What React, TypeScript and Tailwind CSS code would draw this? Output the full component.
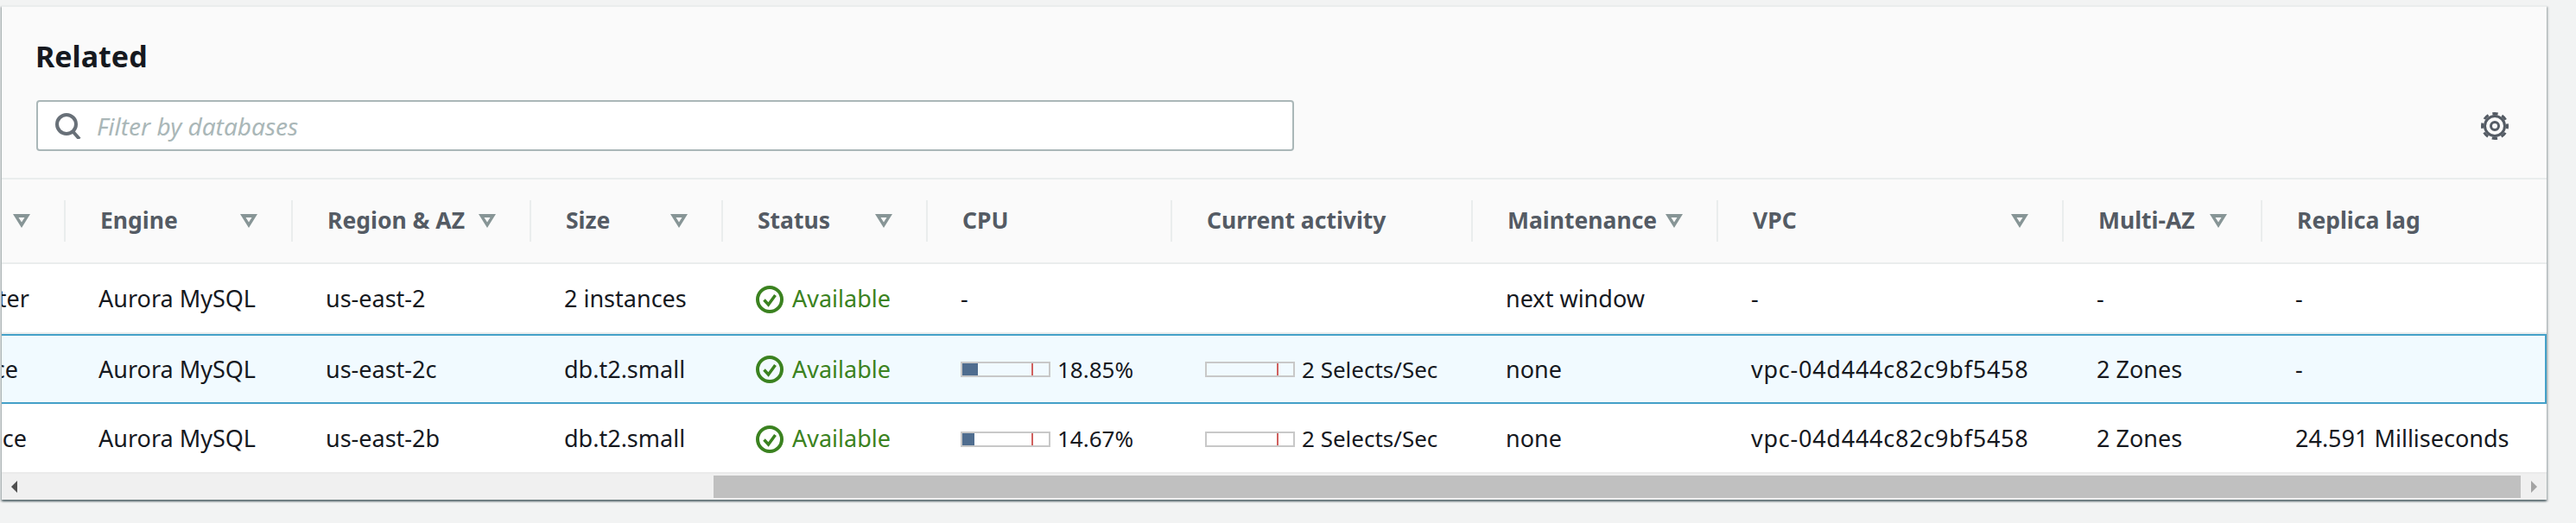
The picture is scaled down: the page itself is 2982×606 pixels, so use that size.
import React from 'react';

const gridCols =
  'grid grid-cols-[74px_263px_276px_222px_237px_283px_348px_284px_400px_230px_1fr]';

const headers = [
  { label: '', sortable: true },
  { label: 'Engine', sortable: true },
  { label: 'Region & AZ', sortable: true },
  { label: 'Size', sortable: true },
  { label: 'Status', sortable: true },
  { label: 'CPU', sortable: false },
  { label: 'Current activity', sortable: false },
  { label: 'Maintenance', sortable: true },
  { label: 'VPC', sortable: true },
  { label: 'Multi-AZ', sortable: true },
  { label: 'Replica lag', sortable: false },
];

const rows = [
  {
    role: 'Regional cluster',
    roleInset: 'pr-[42px]',
    region: 'us-east-2',
    size: '2 instances',
    cpu: null,
    activity: false,
    maintenance: 'next window',
    vpc: '-',
    multiAz: '-',
    lag: '-',
    selected: false,
  },
  {
    role: 'Writer instance',
    roleInset: 'pr-[55px]',
    region: 'us-east-2c',
    size: 'db.t2.small',
    cpu: { fill: 18, label: '18.85%' },
    activity: true,
    maintenance: 'none',
    vpc: 'vpc-04d444c82c9bf5458',
    multiAz: '2 Zones',
    lag: '-',
    selected: true,
  },
  {
    role: 'Reader instance',
    roleInset: 'pr-[45px]',
    region: 'us-east-2b',
    size: 'db.t2.small',
    cpu: { fill: 14, label: '14.67%' },
    activity: true,
    maintenance: 'none',
    vpc: 'vpc-04d444c82c9bf5458',
    multiAz: '2 Zones',
    lag: '24.591 Milliseconds',
    selected: false,
  },
];

function SortIcon() {
  return (
    <svg width="20" height="16" viewBox="0 0 20 16" className="shrink-0">
      <path fill="#879596" fillRule="evenodd" d="M0 0H20L10 16Z M6.5 4H13.5L10 9.6Z" />
    </svg>
  );
}

function SearchIcon() {
  return (
    <svg width="30" height="30" viewBox="0 0 30 30" fill="none" stroke="#687078" className="shrink-0">
      <circle cx="13" cy="13" r="11" strokeWidth="4" />
      <path d="M20 21l8 9" strokeWidth="4" />
    </svg>
  );
}

function GearIcon() {
  return (
    <svg width="32" height="32" viewBox="0 0 32 32" fill="none" stroke="#545b64">
      <circle cx="16" cy="16" r="11.5" strokeWidth="3" />
      <circle cx="16" cy="16" r="14.5" strokeWidth="3" strokeDasharray="6.4 4.99" strokeDashoffset="3.2" />
      <circle cx="16" cy="16" r="4.5" strokeWidth="3" />
    </svg>
  );
}

function StatusIcon() {
  return (
    <svg width="32" height="32" viewBox="0 0 32 32" fill="none" stroke="#3b8220" className="shrink-0">
      <circle cx="16" cy="16" r="14" strokeWidth="4" />
      <path d="M9.5 16.5l5 5.5 8-11" strokeWidth="3.5" />
    </svg>
  );
}

function UsageBar({ fill, tick, label }: { fill: number; tick: number; label: string }) {
  return (
    <div className="flex items-center">
      <div className="relative w-[104px] h-[18px] border-2 border-[#c8c8c8] shrink-0">
        {fill > 0 && <div className="h-full bg-[#4f6d8f]" style={{ width: fill }} />}
        <div className="absolute top-0 bottom-0 w-[2px] bg-[#d0605e]" style={{ left: tick }} />
      </div>
      <span className="ml-[8px] text-[26px] whitespace-nowrap">{label}</span>
    </div>
  );
}

export default function App() {
  return (
    <div className="h-[606px] bg-[#f2f3f3] pt-[6px] pl-[2px] overflow-hidden font-['Noto_Sans',sans-serif] text-[#16191f]">
      <div className="w-[2946px] border-t-2 border-[#eaeded] bg-white shadow-[0_2px_2px_0_rgba(0,28,36,0.5),2px_2px_2px_0_rgba(0,28,36,0.15),-2px_2px_2px_0_rgba(0,28,36,0.15)]">
        {/* Title and filter */}
        <div className="bg-[#fafafa] h-[200px] border-b-2 border-[#eaeded] pl-[40px] pr-[44px] pt-[34px]">
          <h2 className="text-[34px] leading-[46px] font-bold -ml-[1px]">Related</h2>
          <div className="flex items-center justify-between mt-[28px]">
            <div className="flex items-center w-[1456px] h-[59px] bg-white border-2 border-[#aab7b8] rounded-[4px] pl-[20px]">
              <SearchIcon />
              <input
                readOnly
                placeholder="Filter by databases"
                className="ml-[18px] flex-1 text-[28px] italic outline-none placeholder:text-[#aab7b8]"
              />
            </div>
            <GearIcon />
          </div>
        </div>

        {/* Column headers */}
        <div className={`${gridCols} bg-[#fafafa] h-[98px] border-b-2 border-[#eaeded] pt-[24px]`}>
          {headers.map((h, i) => (
            <div
              key={i}
              className={`h-[48px] flex items-center justify-between pr-[39px] text-[26.5px] font-bold text-[#545b64] whitespace-nowrap ${
                i < headers.length - 1 ? 'border-r-2 border-[#eaeded]' : ''
              } ${i === 0 ? 'pl-[10px]' : 'pl-[40px]'}`}
            >
              <span>{h.label}</span>
              {h.sortable && <SortIcon />}
            </div>
          ))}
        </div>

        {/* Rows */}
        {rows.map((r, i) => (
          <div
            key={r.region}
            className={`${gridCols} items-center text-[27px] ${
              r.selected
                ? 'h-[81px] pt-[1px] bg-[#f1faff] border-y-2 border-r-2 border-[#44a0c8]'
                : i === 0
                  ? 'h-[81px] pt-[2px] border-b-2 border-[#eaeded]'
                  : 'h-[79px] pt-[2px]'
            }`}
          >
            <div className={`flex justify-end overflow-hidden whitespace-nowrap ${r.roleInset}`}>{r.role}</div>
            <div className="pl-[38px]">Aurora MySQL</div>
            <div className="pl-[38px]">{r.region}</div>
            <div className="pl-[38px]">{r.size}</div>
            <div className="pl-[38px] flex items-center gap-[10px] text-[#3b8220]">
              <StatusIcon />
              <span>Available</span>
            </div>
            <div className="pl-[38px]">
              {r.cpu ? <UsageBar fill={r.cpu.fill} tick={80} label={r.cpu.label} /> : '-'}
            </div>
            <div className="pl-[38px]">
              {r.activity && <UsageBar fill={0} tick={81} label="2 Selects/Sec" />}
            </div>
            <div className="pl-[38px]">{r.maintenance}</div>
            <div className="pl-[38px] tracking-[0.75px]">{r.vpc}</div>
            <div className="pl-[38px]">{r.multiAz}</div>
            <div className="pl-[38px] whitespace-nowrap">{r.lag}</div>
          </div>
        ))}

        {/* Horizontal scrollbar */}
        <div className="flex items-center h-[32px] bg-[#f0f0f0] border-t-2 border-[#ebebeb]">
          <svg width="7" height="14" viewBox="0 0 7 14" className="ml-[11px] shrink-0">
            <path fill="#505050" d="M7 0V14L0 7Z" />
          </svg>
          <div className="ml-[806px] w-[2092px] h-[26px] bg-[#c0c0c0]" />
          <svg width="7" height="14" viewBox="0 0 7 14" className="ml-[12px] shrink-0">
            <path fill="#a3a3a3" d="M0 0V14L7 7Z" />
          </svg>
        </div>
      </div>
    </div>
  );
}
